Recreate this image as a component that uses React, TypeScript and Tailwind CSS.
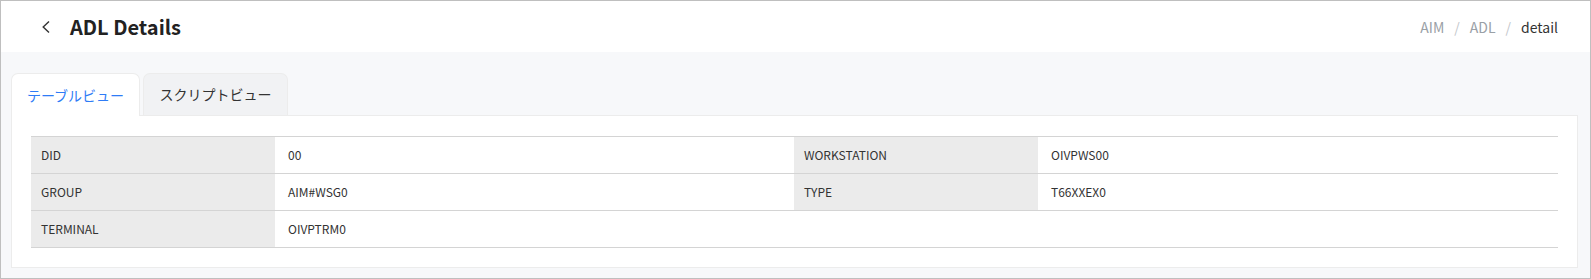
import React from "react";

const font = { fontFamily: '"Noto Sans CJK JP", "Noto Sans", sans-serif' };

const rows: [string, string, string, string][] = [
  ["DID", "00", "WORKSTATION", "OIVPWS00"],
  ["GROUP", "AIM#WSG0", "TYPE", "T66XXEX0"],
  ["TERMINAL", "OIVPTRM0", "", ""],
];

export default function App() {
  return (
    <div
      className="w-[1591px] h-[279px] border border-[#bfbfbf] bg-[#f7f8fa] flex flex-col text-[#333]"
      style={font}
    >
      <header className="h-[51px] bg-white flex items-center justify-between pl-[39px] pr-[32px] shrink-0">
        <div className="flex items-center">
          <svg width="12" height="14" viewBox="0 0 12 14" className="mr-[18px]">
            <path d="M9 1.5 L3.2 7 L9 12.5" fill="none" stroke="#333" strokeWidth="1.4" />
          </svg>
          <h1 className="text-[20px] font-bold text-[#222] leading-none">ADL Details</h1>
        </div>
        <nav className="flex items-center text-[14px] leading-none">
          <span className="text-[#9aa0a6]">AIM</span>
          <span className="text-[#c4c7cc] mx-[10px]">/</span>
          <span className="text-[#9aa0a6]">ADL</span>
          <span className="text-[#c4c7cc] mx-[10px]">/</span>
          <span className="text-[#333]">detail</span>
        </nav>
      </header>
      <main className="flex-1 pt-[21px] pl-[10px] pr-[12px] pb-[10px] flex flex-col">
        <div className="flex gap-[3px] items-end h-[42px] relative z-10">
          <div className="h-[43px] w-[129px] bg-white border border-b-0 border-[#ececec] rounded-t-[7px] flex items-center justify-center text-[14px] text-[#2f7cf6] -mb-px">
            テーブルビュー
          </div>
          <div className="h-[42px] w-[145px] bg-[#f1f2f4] border border-b-0 border-[#ececec] rounded-t-[7px] flex items-center justify-center text-[14px] text-[#333]">
            スクリプトビュー
          </div>
        </div>
        <section className="flex-1 bg-white border border-[#ececec] pt-[20px] px-[19px]">
          <div className="border-t border-[#d4d4d4]">
            {rows.map((r, i) => (
              <div
                key={i}
                className="grid grid-cols-[244px_519px_244px_1fr] h-[37px] border-b border-[#d4d4d4] text-[12px] text-[#333]"
              >
                <div className="bg-[#ebebeb] flex items-center pl-[10px]">{r[0]}</div>
                <div className="flex items-center pl-[13px]">{r[1]}</div>
                <div className={`${r[2] ? "bg-[#ebebeb]" : ""} flex items-center pl-[10px]`}>{r[2]}</div>
                <div className="flex items-center pl-[13px]">{r[3]}</div>
              </div>
            ))}
          </div>
        </section>
      </main>
    </div>
  );
}
